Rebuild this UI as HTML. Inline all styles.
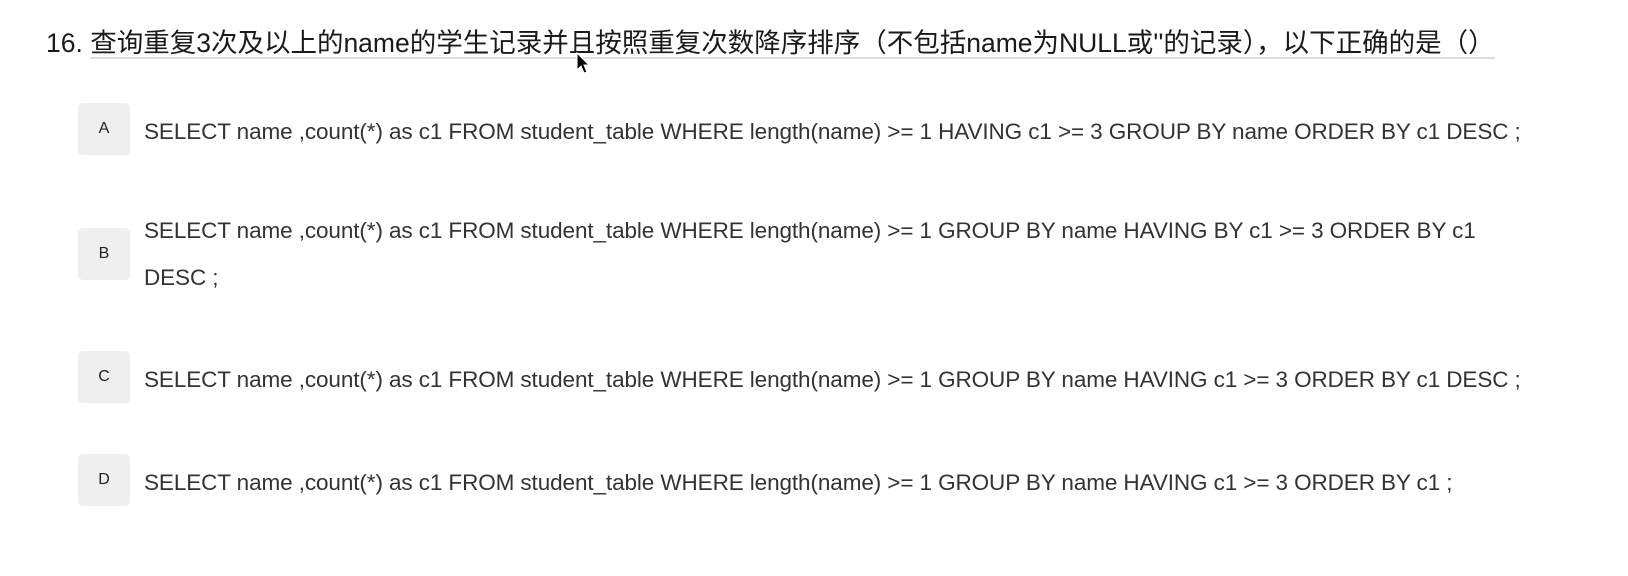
<!DOCTYPE html>
<html><head><meta charset="utf-8"><style>
body{margin:0;background:#fff;width:1628px;height:576px;overflow:hidden;font-family:"Liberation Sans","Noto Sans CJK SC",sans-serif;color:#222}
.q{position:absolute;left:46px;top:21px;font-size:26.5px;white-space:nowrap;color:#1a1a1a}
.q span{text-decoration:underline;text-decoration-color:#ddd;text-underline-offset:5px}
.box{position:absolute;left:78px;width:52px;height:52px;background:#efefef;border-radius:5px;font-size:16px;line-height:52px;text-align:center;color:#222}
.t{position:absolute;left:144px;font-size:22.5px;color:#333;white-space:nowrap;line-height:47px;letter-spacing:-0.1px}
</style></head><body>
<div class="q">16. <span>查询重复3次及以上的name的学生记录并且按照重复次数降序排序（不包括name为NULL或''的记录），以下正确的是（）</span></div>
<div class="box" style="top:103px">A</div>
<div class="t" style="top:108px">SELECT name ,count(*) as c1 FROM student_table WHERE length(name) &gt;= 1 HAVING c1 &gt;= 3 GROUP BY name ORDER BY c1 DESC ;</div>
<div class="box" style="top:228px">B</div>
<div class="t" style="top:207px">SELECT name ,count(*) as c1 FROM student_table WHERE length(name) &gt;= 1 GROUP BY name HAVING BY c1 &gt;= 3 ORDER BY c1<br>DESC ;</div>
<div class="box" style="top:351px">C</div>
<div class="t" style="top:356px">SELECT name ,count(*) as c1 FROM student_table WHERE length(name) &gt;= 1 GROUP BY name HAVING c1 &gt;= 3 ORDER BY c1 DESC ;</div>
<div class="box" style="top:454px">D</div>
<div class="t" style="top:459px">SELECT name ,count(*) as c1 FROM student_table WHERE length(name) &gt;= 1 GROUP BY name HAVING c1 &gt;= 3 ORDER BY c1 ;</div>
<svg style="position:absolute;left:576px;top:52px" width="16" height="24" viewBox="0 0 16 24"><path d="M1 1 L1 18 L5 14 L8 21 L11 20 L8 13 L13 13 Z" fill="#000" stroke="#fff" stroke-width="1"/></svg>
</body></html>
